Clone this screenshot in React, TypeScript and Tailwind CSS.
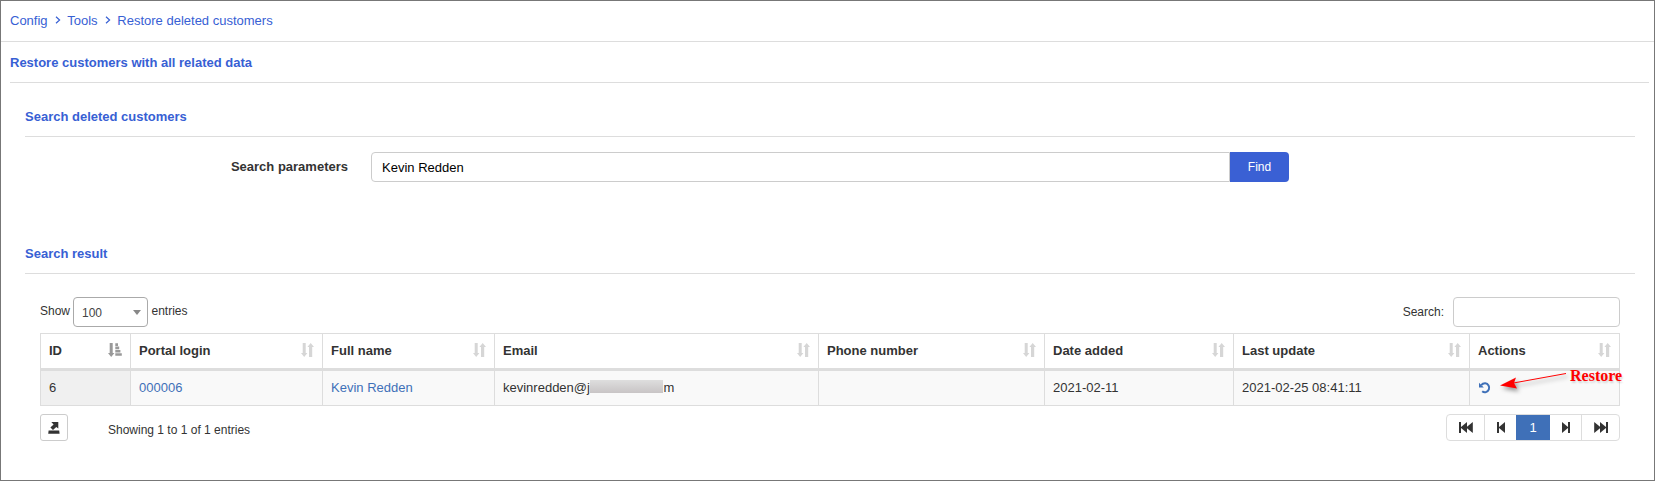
import React from "react";

type Column = { label: string; sorted?: boolean };

const columns: Column[] = [
  { label: "ID", sorted: true },
  { label: "Portal login" },
  { label: "Full name" },
  { label: "Email" },
  { label: "Phone number" },
  { label: "Date added" },
  { label: "Last update" },
  { label: "Actions" },
];

const gridCols =
  "grid grid-cols-[90px_192px_172px_324px_226px_189px_236px_150px]";

function Chevron() {
  return (
    <svg className="ml-[7px] mr-[6.7px] mb-[3px] h-[8px] w-[6px]" viewBox="0 0 6 8" fill="none">
      <path d="M1 0.7L4.6 4L1 7.3" stroke="#3760d4" strokeWidth="1.2" />
    </svg>
  );
}

function SortIcon() {
  return (
    <svg className="h-[14px] w-[13px]" viewBox="0 0 13 14" fill="#d6d6d6">
      <path d="M1.7 0H4.7V10H6.4L3.2 14L0 10H1.7Z" />
      <path d="M8 14H11.2V4H13L9.7 0L6.4 4H8Z" />
    </svg>
  );
}

function SortedIcon() {
  return (
    <svg className="h-[14px] w-[14px]" viewBox="0 0 14 14" fill="#999">
      <path d="M1.7 0H4.7V10H6.4L3.2 14L0 10H1.7Z" />
      <path d="M7.3 0.3H10V2.9H7.3ZM7.3 3.6H11.2V6.2H7.3ZM7.3 6.9H12.4V9.5H7.3ZM7.3 10.2H13.8V12.8H7.3Z" />
    </svg>
  );
}

function ExportIcon() {
  return (
    <svg className="relative -left-[0.5px] h-[12px] w-[12px]" viewBox="0 0 12 12" fill="#333">
      <path d="M3.3 0H10.3V6.6L8.3 4.9L5 8L2.4 5.6L5.6 2.4Z" />
      <path d="M0.6 8.6H11.2L11.6 11.8H0.2Z" />
    </svg>
  );
}

function RestoreIcon() {
  return (
    <svg className="ml-px h-[12px] w-[12px]" viewBox="0 0 12 12" fill="none">
      <path d="M2.2 3.2C3.5 1.6 4.8 1.2 6.3 1.3A4.3 4.5 0 1 1 3.2 9.3" stroke="#3f70b8" strokeWidth="2" />
      <path d="M0 0.8V5.4H4.8Z" fill="#3f70b8" />
    </svg>
  );
}

function StepIcon({ double, flip }: { double?: boolean; flip?: boolean }) {
  return (
    <svg
      className={`h-[11px] ${double ? "w-[14px]" : "w-[8px]"} ${flip ? "-scale-x-100" : ""}`}
      viewBox={double ? "0 0 14 11" : "0 0 8 11"}
      fill="#333"
    >
      <path d="M0 0H2V11H0Z" />
      <path d="M8 0V11L1.5 5.5Z" />
      {double && <path d="M13.8 0V11L7.1 5.5Z" />}
    </svg>
  );
}

function SectionTitle({ children }: { children: React.ReactNode }) {
  return (
    <h2 className="flex h-[41px] items-center border-b border-[#ddd] pt-[2px] font-bold text-[#3760d4]">
      {children}
    </h2>
  );
}

function Cell({ children }: { children?: React.ReactNode }) {
  return (
    <div className="flex items-center border-r border-[#ddd] pl-[8px] pb-[1px]">
      {children}
    </div>
  );
}

export default function App() {
  return (
    <div className="relative h-[481px] w-[1655px] overflow-hidden border border-[#777] bg-white font-['Liberation_Sans',sans-serif] text-[13px] leading-[18px] text-[#333]">
      <nav className="flex h-[41px] items-center border-b border-[#ddd] pl-[9px] text-[#3760d4]">
        <a>Config</a>
        <Chevron />
        <a>Tools</a>
        <Chevron />
        <a>Restore deleted customers</a>
      </nav>

      <div className="ml-[9px] mr-[5px]">
        <SectionTitle>Restore customers with all related data</SectionTitle>
        <div className="ml-[15px] mr-[14px]">
          <section className="pt-[13px]">
            <SectionTitle>Search deleted customers</SectionTitle>
            <div className="mt-[15px] flex h-[30px]">
              <label className="mr-[23px] w-[323px] pt-[6px] text-right font-bold">
                Search parameters
              </label>
              <div className="flex w-[859px] items-center rounded-l border border-[#ccc] pl-[10px] pt-[1px] text-black">
                Kevin Redden
              </div>
              <button className="w-[59px] rounded-r bg-[#3a60d4] pb-px text-[12px] text-white">
                Find
              </button>
            </div>
          </section>

          <section className="pt-[51px]">
            <SectionTitle>Search result</SectionTitle>
            <div className="ml-[15px] mr-[15px]">
              <div className="mt-[23px] flex h-[30px] items-start justify-between text-[12px]">
                <div className="flex">
                  <span className="w-[33px] pt-[5px]">Show</span>
                  <div className="flex h-[30px] w-[75px] items-center justify-between rounded border border-[#aaa] pl-[8px] pr-[6px] text-[#444]">
                    <span className="pt-px">100</span>
                    <svg className="h-[5px] w-[8px]" viewBox="0 0 8 5" fill="#888">
                      <path d="M0 0H8L4 5Z" />
                    </svg>
                  </div>
                  <span className="pl-[3.5px] pt-[5px]">entries</span>
                </div>
                <div className="flex">
                  <span className="pr-[9px] pt-[6px]">Search:</span>
                  <div className="h-[30px] w-[167px] rounded border border-[#ccc]" />
                </div>
              </div>

              <div className="mt-[6px] w-[1580px] border border-r-0 border-[#ddd]">
                <div className={`${gridCols} h-[37px] border-b-[3px] border-[#ddd] font-bold`}>
                  {columns.map((c) => (
                    <div
                      key={c.label}
                      className="flex items-center justify-between border-r border-[#ddd] pl-[8px] pr-[8px] pb-[2px]"
                    >
                      <span className="pt-[2px]">{c.label}</span>
                      {c.sorted ? <SortedIcon /> : <SortIcon />}
                    </div>
                  ))}
                </div>
                <div className={`${gridCols} h-[34px] bg-[#f9f9f9]`}>
                  <div className="flex items-center border-r border-[#ddd] bg-[#f0f0f0] pl-[8px] pb-[1px]">6</div>
                  <Cell>
                    <a className="text-[#3f70b8]">000006</a>
                  </Cell>
                  <Cell>
                    <a className="text-[#3f70b8]">Kevin Redden</a>
                  </Cell>
                  <Cell>
                    <span>kevinredden@j</span>
                    <span className="ml-[0.5px] mb-[3px] h-[13px] w-[73px] bg-linear-to-b from-[#dedede] to-[#c8c4c5]" />
                    <span>m</span>
                  </Cell>
                  <Cell />
                  <Cell>2021-02-11</Cell>
                  <Cell>2021-02-25 08:41:11</Cell>
                  <Cell>
                    <RestoreIcon />
                  </Cell>
                </div>
              </div>

              <div className="mt-[8px] flex h-[27px]">
                <button className="flex w-[28px] items-center justify-center rounded-[3px] border border-[#ccc]">
                  <ExportIcon />
                </button>
                <span className="ml-[40px] pt-[7px] text-[12px]">Showing 1 to 1 of 1 entries</span>
                <div className="ml-auto flex w-[174px] overflow-hidden rounded border border-[#ddd]">
                  <div className="flex w-[38px] items-center justify-center border-r border-[#ddd]">
                    <StepIcon double />
                  </div>
                  <div className="flex w-[31px] items-center justify-center">
                    <StepIcon />
                  </div>
                  <div className="-my-px flex w-[34px] items-center justify-center bg-[#3f70b8] text-white">
                    1
                  </div>
                  <div className="flex w-[32px] items-center justify-center border-r border-[#ddd]">
                    <StepIcon flip />
                  </div>
                  <div className="flex flex-1 items-center justify-center">
                    <StepIcon double flip />
                  </div>
                </div>
              </div>
            </div>
          </section>
        </div>
      </div>

      <svg
        className="absolute left-[1494px] top-[364px] h-[32px] w-[80px] drop-shadow-[2px_3px_2px_rgba(0,0,0,0.4)]"
        viewBox="0 0 80 32"
      >
        <path d="M14 18.8L71 8.5" stroke="#f00" strokeWidth="1" />
        <path d="M5 20.5L21 12.5L19 18L22 23.5Z" fill="#f00" />
      </svg>
      <span className="absolute left-[1569px] top-[366px] font-['Liberation_Serif',serif] text-[16px] font-bold text-[#f00] [text-shadow:1px_2px_2px_rgba(0,0,0,0.15)]">
        Restore
      </span>
    </div>
  );
}
